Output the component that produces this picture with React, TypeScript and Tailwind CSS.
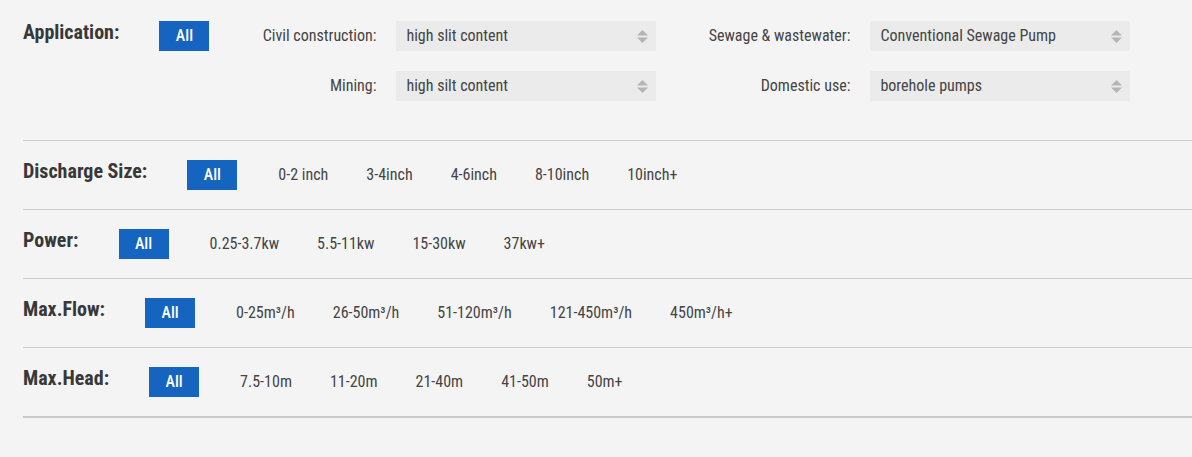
import React from 'react';

const FILTERS: { label: string; options: string[] }[] = [
  { label: 'Discharge Size:', options: ['0-2 inch', '3-4inch', '4-6inch', '8-10inch', '10inch+'] },
  { label: 'Power:', options: ['0.25-3.7kw', '5.5-11kw', '15-30kw', '37kw+'] },
  { label: 'Max.Flow:', options: ['0-25m³/h', '26-50m³/h', '51-120m³/h', '121-450m³/h', '450m³/h+'] },
  { label: 'Max.Head:', options: ['7.5-10m', '11-20m', '21-40m', '41-50m', '50m+'] },
];

function AllButton() {
  return (
    <button
      type="button"
      className="w-[50px] h-[30px] shrink-0 bg-[#1565c0] text-white text-[16px] font-medium leading-[30px] text-center"
    >
      All
    </button>
  );
}

function SelectArrows() {
  return (
    <svg className="w-[11px] h-[13px] shrink-0" viewBox="0 0 11 13" fill="#b5b5b5">
      <path d="M5.5 0 L11 5.5 L0 5.5 Z" />
      <path d="M0 7.5 L11 7.5 L5.5 13 Z" />
    </svg>
  );
}

function Select({ value }: { value: string }) {
  return (
    <div className="w-[260px] h-[30px] bg-[#ebebeb] flex items-center justify-between pl-[10px] pr-[8px] text-[16px] text-[#444]">
      <span>{value}</span>
      <SelectArrows />
    </div>
  );
}

function Field({ label, value }: { label: string; value: string }) {
  return (
    <div className="flex items-center h-[30px]">
      <span className="w-[153px] text-right text-[16px] text-[#444] mr-[20px]">{label}</span>
      <Select value={value} />
    </div>
  );
}

function Label({ children }: { children: React.ReactNode }) {
  return (
    <span className="text-[20px] font-bold leading-[22px] text-[#383838] mr-[40px]">
      {children}
    </span>
  );
}

export default function App() {
  return (
    <div
      className="min-h-[457px] w-full bg-[#f4f4f4] pl-[23px] text-[#444] [font-stretch:condensed]"
      style={{ fontFamily: '"Roboto Condensed", Roboto, "Liberation Sans", sans-serif' }}
    >
      <div className="flex items-start pt-[21px] pb-[39px]">
        <Label>Application:</Label>
        <AllButton />
        <div className="flex ml-[14px] gap-[41px]">
          <div className="flex flex-col gap-[20px]">
            <Field label="Civil construction:" value="high slit content" />
            <Field label="Mining:" value="high silt content" />
          </div>
          <div className="flex flex-col gap-[20px]">
            <Field label="Sewage & wastewater:" value="Conventional Sewage Pump" />
            <Field label="Domestic use:" value="borehole pumps" />
          </div>
        </div>
      </div>

      {FILTERS.map((f, i) => (
        <div
          key={f.label}
          className={`flex items-start pt-[19px] pb-[19px] border-t border-[#cccccc] ${
            i === FILTERS.length - 1 ? 'border-b-2 border-b-[#c8c8c8]' : ''
          }`}
        >
          <Label>{f.label}</Label>
          <AllButton />
          <div className="flex items-center h-[30px] ml-[41px] gap-[38px] text-[16px] text-[#444]">
            {f.options.map(o => (
              <span key={o}>{o}</span>
            ))}
          </div>
        </div>
      ))}
    </div>
  );
}
